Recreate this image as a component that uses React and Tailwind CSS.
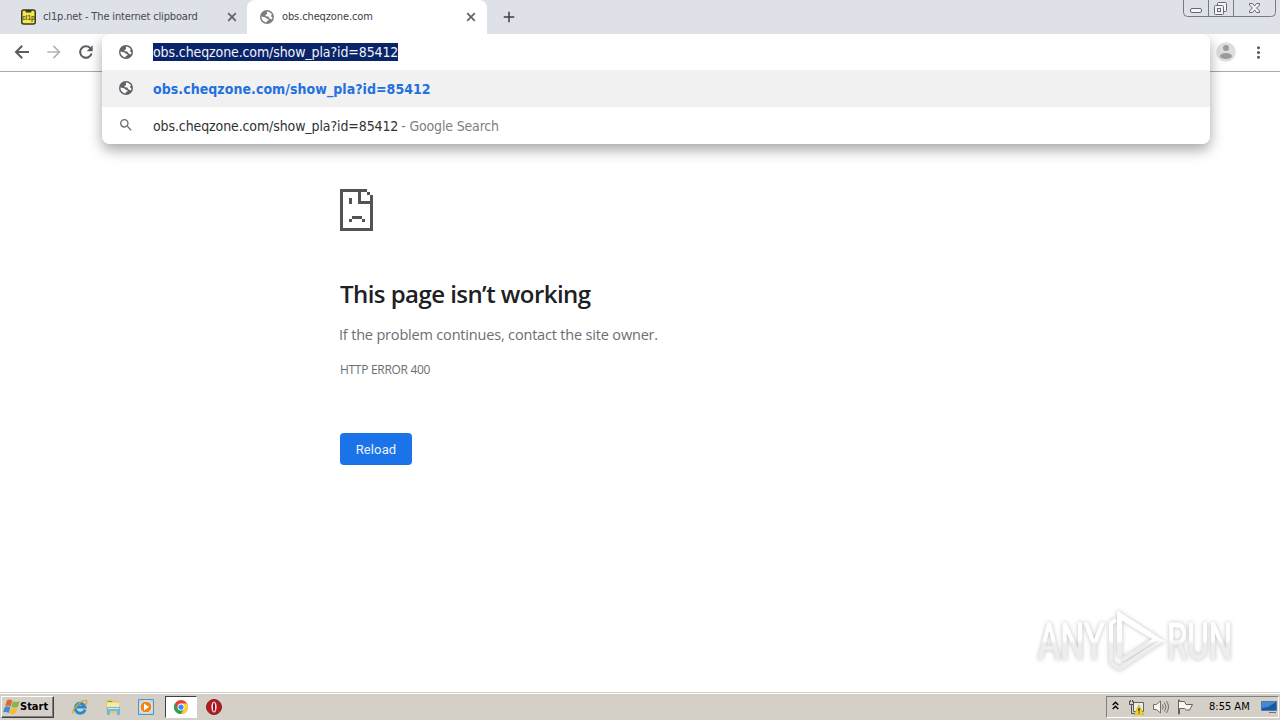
import React from "react";
import { MdArrowForward, MdAdd, MdSearch, MdMoreVert } from "react-icons/md";

const URL_TEXT = "obs.cheqzone.com/show_pla?id=85412";

const Globe = ({ className }) => (
  <svg viewBox="0 0 14 14" className={className}>
    <circle cx="7" cy="7" r="7" fill="currentColor" />
    <path
      d="M1.500 6.600 4.800 7.200q1.500.2 1.800 1.500l1.800.4v1.300l-1.700.5v1.500C3.700 12.200 1.300 9.900 1.500 6.600zM6.900 1.500c2.300 0 4.300 1.300 5.100 3.300L10.600 6.100 12.400 7.200q0 1.200-.5 2.300L9.200 8.300 8.300 6.500 6 6.300 5.200 5.100 7 4.300z"
      fill="white"
    />
  </svg>
);

const CloseIcon = ({ className }) => (
  <svg viewBox="0 0 12 12" className={className} fill="none" stroke="#5f6368" strokeWidth="1.700">
    <path d="m2.200 2.200 7.600 7.600M9.800 2.200 2.200 9.800" />
  </svg>
);

const BackIcon = () => (
  <svg viewBox="0 0 20 20" className="ml-3 h-5 w-5" fill="none" stroke="#5a5d61" strokeWidth="2">
    <path d="M17 10H4.500M10.200 3.800 4 10l6.200 6.200" />
  </svg>
);

const ReloadIcon = () => (
  <svg viewBox="0 0 20 20" className="ml-3 h-5 w-5" fill="none" stroke="#5a5d61" strokeWidth="2">
    <path d="M15.600 11.500A5.800 5.800 0 1 1 14.200 6l1 1" />
    <path d="M16.700 3.300v6h-6z" fill="#5a5d61" stroke="none" />
  </svg>
);

const Tab = ({ title, icon, active }) => (
  <div
    className={
      active
        ? "relative flex h-[34px] w-[240px] items-center rounded-t-lg bg-white pl-[13px]"
        : "flex h-[34px] w-[247px] items-center pl-[21px]"
    }
  >
    <span className="flex h-4 w-[14px] shrink-0 items-center">{icon}</span>
    <span
      className={
        active
          ? "ml-2 flex-1 whitespace-nowrap pt-px text-[11px] tracking-[-0.120px] text-[#3c4043]"
          : "ml-2 flex-1 whitespace-nowrap pt-px text-[11px] tracking-[-0.150px] text-[#45494d]"
      }
    >
      {title}
    </span>
    <CloseIcon className={active ? "mr-[10px] h-3 w-3" : "mr-[9px] h-3 w-3"} />
  </div>
);

const WindowButtons = () => (
  <svg viewBox="0 0 94 18" className="absolute right-[3px] top-0 h-[18px] w-[94px]" fill="none" stroke="#777b84">
    <path d="M.5 0v12.500q0 4 4 4h84q4 0 4-4V0M25.500 0v16M50.500 0v16" />
    <rect x="7.500" y="8.500" width="11" height="4" rx="1.500" fill="#f4f5f7" stroke="#646973" />
    <rect x="34.500" y="2.500" width="9" height="9" rx="1" fill="#f4f5f7" stroke="#646973" />
    <rect x="31.500" y="5.500" width="9" height="9" rx="1" fill="#f4f5f7" stroke="#646973" />
    <rect x="34.500" y="8.500" width="3" height="3" stroke="#646973" />
    <path
      d="M66.500 3.500h3l2 2.500 2-2.500h3v1.500l-3 3 3 3v1.500h-3l-2-2.500-2 2.500h-3V11l3-3-3-3z"
      fill="#f4f5f7"
      stroke="#646973"
    />
  </svg>
);

const TabStrip = () => (
  <div className="relative flex h-[34px] items-center bg-[#dee1e8] font-['DejaVu_Sans_Condensed','DejaVu_Sans',sans-serif]">
    <Tab
      title="cl1p.net - The internet clipboard"
      icon={
        <svg viewBox="0 0 15 16" className="h-4 w-[15px] shrink-0">
          <rect x=".75" y="1" width="13.500" height="14" rx="2" fill="#f2e94e" stroke="#3b3a1e" strokeWidth="1.500" />
          <path d="M4 1h7l-1 2.500H5z" fill="#3b3a1e" />
          <text x="7.500" y="10.500" textAnchor="middle" fontSize="6.500" fontWeight="bold" fill="#56531f" fontFamily="Liberation Sans">
            cl1p
          </text>
        </svg>
      }
    />
    <Tab title="obs.cheqzone.com" active icon={<Globe className="h-[14px] w-[14px] text-[#7b7f83]" />} />
    <MdAdd className="ml-[13px] h-[18px] w-[18px] text-[#3c4043]" />
    <WindowButtons />
  </div>
);

const Toolbar = () => (
  <div className="flex h-[38px] items-center border-b border-[#a8a9ab] bg-white pb-px">
    <BackIcon />
    <MdArrowForward className="ml-3 h-5 w-5 text-[#b4b5b7]" />
    <ReloadIcon />
    <svg viewBox="0 0 20 20" className="ml-auto h-5 w-5">
      <circle cx="10" cy="10" r="9.800" fill="#dedede" />
      <circle cx="10" cy="6" r="3" fill="#9b9b9b" />
      <ellipse cx="10" cy="14" rx="6" ry="3" fill="#9b9b9b" />
    </svg>
    <MdMoreVert className="ml-[13px] mr-[12px] h-[19px] w-[19px] text-[#5a5d61]" />
  </div>
);

const Omnibox = () => (
  <div className="absolute left-[102px] top-[34px] h-[110px] w-[1108px] overflow-hidden rounded-lg bg-white font-['DejaVu_Sans_Condensed','DejaVu_Sans',sans-serif] text-[14px]">
    <div className="flex h-9 items-center pl-[17px]">
      <Globe className="h-[14px] w-[14px] text-[#5f6368]" />
      <span className="ml-5 h-[18px] whitespace-nowrap bg-[#0a246a] leading-[19px] tracking-[-0.110px] text-[#f1f3f7]">
        {URL_TEXT}
      </span>
    </div>
    <div className="flex h-[37px] items-center bg-[#f1f1f1] pl-[17px]">
      <Globe className="mb-px h-[14px] w-[14px] text-[#5f6368]" />
      <span className="ml-5 whitespace-nowrap pt-px font-bold tracking-[0.050px] text-[#2370df]">{URL_TEXT}</span>
    </div>
    <div className="flex h-[37px] items-center pl-4">
      <MdSearch className="mb-px h-4 w-4 text-[#6c7074]" />
      <span className="ml-[19px] whitespace-nowrap pt-px tracking-[-0.110px] text-[#303236]">{URL_TEXT}</span>
      <span className="ml-[3px] whitespace-nowrap pt-px tracking-[-0.170px] text-[#7b7f83]">- Google Search</span>
    </div>
  </div>
);

const ErrorPage = () => (
  <main className="flex flex-1 flex-col items-start pl-[340px] pt-[117px] font-['Open_Sans','Noto_Sans',sans-serif]">
    <svg viewBox="0 0 33 42" className="h-[42px] w-[33px]" fill="#535353" shapeRendering="crispEdges">
      <path d="M0 0h27v3H3v36h27V15H18V3h3v9h9V6h3v36H0zM27 3h3v3h-3zM9 9h3v6H9zM12 27h10v3H12zM9 30h3v3H9zM22 30h3v3h-3z" />
    </svg>
    <h1 className="mt-[47px] whitespace-nowrap text-[24px] font-semibold leading-[32px] tracking-[-0.550px] text-[#202124]">
      This page isn’t working
    </h1>
    <p className="-ml-px mt-[13px] whitespace-nowrap text-[14.500px] leading-[24px] tracking-[-0.180px] text-[#6b6e72]">
      If the problem continues, contact the site owner.
    </p>
    <p className="mt-[13px] whitespace-nowrap text-[12px] leading-[20px] tracking-[-0.300px] text-[#6b6e72]">HTTP ERROR 400</p>
    <button className="mt-[53px] h-8 w-[72px] rounded-[4px] bg-[#1a73e8] pt-px font-['Roboto',sans-serif] text-[13px] tracking-[0.100px] text-[#eaf2fd]">
      Reload
    </button>
  </main>
);

// Translucent brand mark in the bottom right corner
const Watermark = () => (
  <div className="absolute left-[1036px] top-[605px] flex h-[70px] w-[204px] items-center drop-shadow-[0_0_2px_rgba(0,0,0,0.25)]">
    <svg viewBox="0 0 204 70" className="h-[70px] w-[204px] overflow-visible">
      <defs>
        <linearGradient id="mark" x1="0" y1="0" x2="0" y2="70" gradientUnits="userSpaceOnUse">
          <stop offset=".5" stopColor="#ffffff" />
          <stop offset=".56" stopColor="#ededed" />
        </linearGradient>
        {/* Same gradient, measured from the text baseline */}
        <linearGradient id="markText" x1="0" y1="-54" x2="0" y2="16" gradientUnits="userSpaceOnUse">
          <stop offset=".5" stopColor="#ffffff" />
          <stop offset=".56" stopColor="#ededed" />
        </linearGradient>
      </defs>
      <g fill="url(#markText)" stroke="url(#markText)" strokeWidth="1.200" fontFamily="Roboto" fontSize="50">
        <text transform="translate(2 54) scale(.68 1)">ANY</text>
        <text transform="translate(131 54) scale(.66 1)">RUN</text>
      </g>
      <g fill="none" stroke="url(#mark)" strokeWidth="4">
        <path d="M84 52V12l36 22-34 21" />
        <path d="M75 58V18l5-3M83 50V9l42 27-42 28" />
        <path d="M75 58l9 6" />
      </g>
    </svg>
  </div>
);

const StartButton = () => (
  <button className="ml-px flex h-[22px] w-[53px] items-center border border-b-[#404040] border-l-white border-r-[#404040] border-t-white bg-[#d4d0c8] pl-px shadow-[inset_-1px_-1px_0_#808080]">
    <svg viewBox="0 0 17 16" className="h-4 w-[17px] shrink-0">
      <path d="M4 1.200q3-1.500 5.300.6L7.700 7.500Q5 5.800 2.200 7z" fill="#e8622c" />
      <path d="M10 2.300q3 1.500 6.700 0l-2 5.700q-3 1.500-6.300 0z" fill="#83b642" />
      <path d="M1.900 7.900q3-1.500 5.600.5L5.700 14Q3 12.300 0 13.300z" fill="#438bd0" />
      <path d="M8.200 8.900q3 1.500 6.200 0l-1.800 5.600q-3 1.500-6.100 0z" fill="#f5bd31" />
    </svg>
    <span className="pt-px text-[11px] font-bold text-black">Start</span>
  </button>
);

const InternetExplorer = () => (
  <svg viewBox="0 0 16 16" className="h-4 w-4" fill="none">
    <path d="M13 10.500A5 5 0 1 1 13 8H5" stroke="#268bd0" strokeWidth="3" />
    <path d="M1.500 14.500C-1 11 9 1 14 1.500c2 .5 0 4-1 5" stroke="#dca924" strokeWidth="1.300" />
  </svg>
);

const Explorer = () => (
  <svg viewBox="0 0 16 16" className="h-4 w-4">
    <path d="M1 1h6l1 1h6v12H1z" fill="#e9c65c" />
    <path d="M2 3.500h12V11H2z" fill="#f9e9a4" />
    <path d="M3 2h4v1H3z" fill="#4dac61" />
    <path d="M2 8h13v8h-3v-4H5v4H2z" fill="#6eb9df" />
    <path d="M3 9h11v1H3z" fill="#c8ecfa" />
  </svg>
);

const MediaPlayer = () => (
  <svg viewBox="0 0 16 16" className="h-4 w-4">
    <path d="M.5.500h15v15H.5z" fill="#b6d8f3" stroke="#5b91bf" />
    <circle cx="8" cy="8" r="6" fill="#ef8618" stroke="#fff4df" />
    <path d="m6 4.500 5 3.500-5 3.500z" fill="white" />
  </svg>
);

const Chrome = () => (
  <svg viewBox="0 0 16 16" className="h-[14px] w-[14px]">
    <circle cx="8" cy="8" r="8" fill="#e44235" />
    <path d="M1.070 4A8 8 0 0 0 8 16l3.500-6h-7z" fill="#25a453" />
    <path d="M8 16A8 8 0 0 0 14.930 4H8l3.500 6z" fill="#fdcf36" />
    <circle cx="8" cy="8" r="4" fill="white" />
    <circle cx="8" cy="8" r="3" fill="#4285f4" />
  </svg>
);

const OperaLike = () => (
  <svg viewBox="0 0 16 16" className="h-4 w-4">
    <circle cx="8" cy="8" r="7.500" fill="#b71920" stroke="#7c2224" />
    <ellipse cx="8" cy="8" rx="2.600" ry="5.500" fill="#f4e4e2" />
    <ellipse cx="8" cy="8" rx="1" ry="4.500" fill="#7a1416" />
  </svg>
);

const Tray = () => (
  <div className="ml-auto mr-px flex h-[22px] w-[173px] items-center border border-b-white border-l-[#808080] border-r-white border-t-[#808080]">
    <svg viewBox="0 0 7 9" className="ml-[5px] h-[9px] w-[7px] -translate-y-px" fill="none" stroke="black" strokeWidth="1.400">
      <path d="m.7 4 2.800-2.800L6.300 4M.7 8l2.800-2.800L6.300 8" />
    </svg>
    <svg viewBox="0 0 16 16" className="ml-[9px] h-4 w-4">
      <path d="M5.500 3.500h10v9h-10z" fill="#eeece7" stroke="#65635f" />
      <path d="M1.500 2v3.500h4V2M3.500 5.500v9h4M2.500 1v2M4.500 1v2" stroke="#55534f" fill="none" />
      <path d="m11 6 5 10H6z" fill="#f6d51f" stroke="#c19a16" strokeWidth=".6" />
      <path d="M11 9v3.500M11 13.500v1" stroke="#342b08" strokeWidth="1.300" />
    </svg>
    <svg viewBox="0 0 16 16" className="ml-[9px] h-4 w-4" fill="none" stroke="#716f6b">
      <path d="M.5 5.500h3L7.500 2v12l-4-3.500h-3z" fill="#f8f7f5" />
      <path d="M9.500 5.500q1.500 2.500 0 5M11.500 3.500q3 4.500 0 9M13.500 2q4 6 0 12" />
    </svg>
    <svg viewBox="0 0 16 16" className="ml-2 h-4 w-4" fill="#f8f7f5" stroke="#65635f">
      <path d="M1.500 1v14h1V9.500h5l2 1.500h3l3-5.500H9l-1.500-3h-5V1z" />
    </svg>
    <span className="ml-4 whitespace-nowrap pt-px text-[11px] text-black">8:55 AM</span>
    <svg viewBox="0 0 16 14" className="ml-auto mr-px h-[14px] w-4">
      <path d="M.5 1.500h15v9H.5z" fill="#1758a9" stroke="#54789d" />
      <path d="M1 2h14L7 7 1 8z" fill="#3f8ad6" />
      <path d="M8 12.500h7" stroke="#69727a" />
    </svg>
  </div>
);

const Taskbar = () => (
  <footer className="flex h-[28px] items-center border-t border-[#d4d0c8] bg-[#d4d0c8] font-['DejaVu_Sans_Condensed','DejaVu_Sans',sans-serif] shadow-[inset_0_1px_0_white]">
    <StartButton />
    <div className="ml-[18px] flex items-center gap-[17px]">
      <InternetExplorer />
      <Explorer />
      <MediaPlayer />
    </div>
    <div className="ml-[11px] flex h-[22px] w-[32px] items-center justify-center border border-b-white border-l-[#404040] border-r-white border-t-[#404040] bg-white">
      <Chrome />
    </div>
    <span className="ml-[9px]">
      <OperaLike />
    </span>
    <Tray />
  </footer>
);

export default function App() {
  return (
    <div className="relative flex h-[720px] w-[1280px] flex-col overflow-hidden bg-white">
      <TabStrip />
      <Toolbar />
      {/* The shadow sits in its own clip so it never reaches the tabs */}
      <div className="absolute left-0 top-[34px] h-[150px] w-full overflow-hidden">
        <div className="ml-[102px] h-[110px] w-[1108px] rounded-lg shadow-[0_6px_14px_rgba(0,0,0,0.35)]" />
      </div>
      <Omnibox />
      <ErrorPage />
      <Watermark />
      <Taskbar />
    </div>
  );
}
